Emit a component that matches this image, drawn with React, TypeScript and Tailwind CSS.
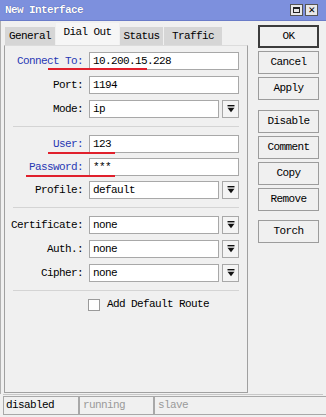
import React from 'react';

const DropArrow = () => (
  <svg width="8" height="8" viewBox="0 0 8 8">
    <rect x="0.5" y="0" width="7" height="1.4" fill="#111" />
    <polygon points="0.5,2.8 7.5,2.8 4,7.2" fill="#111" />
  </svg>
);

type RowProps = { label: string; value: string; drop?: boolean; blue?: boolean };

const Row = ({ label, value, drop, blue }: RowProps) => (
  <div className="flex items-center h-[18px]">
    <div className={`w-[78px] text-right ${blue ? 'text-[#2838b4]' : 'text-black'}`}>{label}</div>
    <div className="ml-[6px] flex gap-[3px]">
      <div
        className={`h-[18px] ${drop ? 'w-[130px]' : 'w-[150px]'} bg-white border border-[#a8a8a8] pl-[3px] leading-[16px]`}
      >
        {value}
      </div>
      {drop && (
        <div className="w-[17px] h-[18px] bg-[#f4f4f4] border border-[#a8a8a8] flex items-center justify-center">
          <DropArrow />
        </div>
      )}
    </div>
  </div>
);

const Separator = ({ mb = 'mb-[8px]' }: { mb?: string }) => (
  <div className={`mt-[8px] ${mb} ml-[8px] w-[226px] h-px bg-[#d4d4d4]`} />
);

const Btn = ({ label, primary, extra }: { label: string; primary?: boolean; extra?: string }) => (
  <div
    className={`w-[61px] h-[23px] flex items-center justify-center bg-[#f0f0f0] ${
      primary ? 'border-2 border-[#3c3c3c]' : 'border border-[#9c9c9c]'
    } ${extra ?? ''}`}
  >
    {label}
  </div>
);

const App = () => {
  const tabs = [
    { name: 'General', w: 'w-[50px]', active: false },
    { name: 'Dial Out', w: 'w-[63px]', active: true },
    { name: 'Status', w: 'w-[43px]', active: false },
    { name: 'Traffic', w: 'w-[58px]', active: false },
  ];

  return (
    <div className="relative w-[326px] h-[417px] bg-[#f0f0f0] overflow-hidden font-['Liberation_Mono',monospace] text-[11px] tracking-[-0.6px] text-black">
      {/* title bar */}
      <div className="h-[21px] bg-[#7d90dd] flex items-center justify-between pl-[5px] pr-[8px] border-b border-[#6a7cc8]">
        <span className="text-white font-bold [text-shadow:0_0_1px_#30408a]">New Interface</span>
        <div className="flex gap-[2px]">
          <div className="w-[13px] h-[12px] bg-[#e8e8e8] border border-[#555] flex items-center justify-center">
            <div className="w-[7px] h-[6px] border border-[#222] border-t-2" />
          </div>
          <div className="w-[13px] h-[12px] bg-[#e8e8e8] border border-[#555] flex items-center justify-center text-[11px] font-bold leading-none">
            ✕
          </div>
        </div>
      </div>

      <div className="flex h-[373px] border-l border-[#b0b0b0]">
        {/* left: tabs + panel */}
        <div className="ml-[3px] w-[244px] flex flex-col">
          <div className="flex items-end h-[24px] pl-[1px] gap-[1px]">
            {tabs.map((t) => (
              <div
                key={t.name}
                className={`${t.w} flex items-center justify-center ${
                  t.active ? 'h-[22px] bg-[#f6f6f6] pb-[3px]' : 'h-[18px] bg-[#d6d6d6]'
                }`}
              >
                {t.name}
              </div>
            ))}
          </div>
          <div className="h-[348px] border border-[#a0a0a0] border-t-[#dcdcdc] pt-[6px]">
            <div className="flex flex-col gap-[6px]">
              <Row label="Connect To:" value="10.200.15.228" blue />
              <Row label="Port:" value="1194" />
              <Row label="Mode:" value="ip" drop />
            </div>
            <Separator />
            <div className="flex flex-col gap-[5px]">
              <Row label="User:" value="123" blue />
              <Row label="Password:" value="***" blue />
              <Row label="Profile:" value="default" drop />
            </div>
            <Separator />
            <div className="flex flex-col gap-[6px]">
              <Row label="Certificate:" value="none" drop />
              <Row label="Auth.:" value="none" drop />
              <Row label="Cipher:" value="none" drop />
            </div>
            <Separator mb="mb-[7px]" />
            <div className="flex items-center h-[13px] ml-[83px]">
              <div className="w-[12px] h-[12px] bg-white border border-[#9a9a9a]" />
              <span className="ml-[7px]">Add Default Route</span>
            </div>
          </div>
        </div>

        {/* right: buttons */}
        <div className="ml-[10px] pt-[4px] flex flex-col gap-[3px]">
          <Btn label="OK" primary />
          <Btn label="Cancel" />
          <Btn label="Apply" />
          <Btn label="Disable" extra="mt-[7px]" />
          <Btn label="Comment" />
          <Btn label="Copy" />
          <Btn label="Remove" />
          <Btn label="Torch" extra="mt-[6px]" />
        </div>
      </div>

      {/* status bar */}
      <div className="h-[1px] bg-[#c8c8c8] mx-[3px]" />
      <div className="flex h-[19px] mt-[1px] pl-[3px]">
        <div className="w-[76px] border border-[#a8a8a8] pl-[2px] leading-[17px]">disabled</div>
        <div className="w-[75px] border border-[#a8a8a8] pl-[3px] leading-[17px] text-[#9a9a9a]">running</div>
        <div className="flex-1 border border-[#a8a8a8] border-r-0 pl-[3px] leading-[17px] text-[#9a9a9a]">slave</div>
      </div>

      {/* red annotation underlines */}
      <div className="absolute left-[48px] top-[68px] w-[99px] h-[2px] bg-[#e0202c]" />
      <div className="absolute left-[48px] top-[152px] w-[67px] h-[2px] bg-[#e0202c]" />
      <div className="absolute left-[26px] top-[175px] w-[89px] h-[2px] bg-[#e0202c]" />
    </div>
  );
};

export default App;
